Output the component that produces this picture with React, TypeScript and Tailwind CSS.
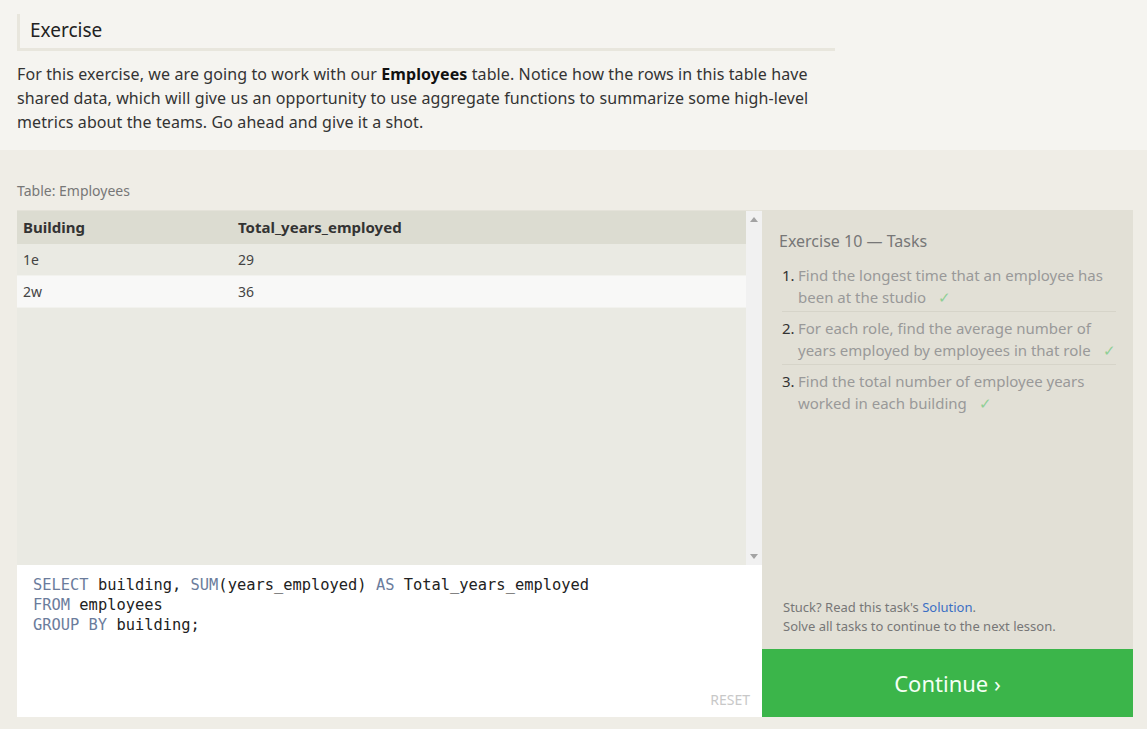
const sans = "font-['Noto_Sans','Open_Sans',sans-serif]";
const mono = "font-['DejaVu_Sans_Mono','Liberation_Mono',monospace]";

const rows = [
  { building: "1e", total: "29" },
  { building: "2w", total: "36" },
];

const tasks = [
  { text: "Find the longest time that an employee has been at the studio" },
  { text: "For each role, find the average number of years employed by employees in that role" },
  { text: "Find the total number of employee years worked in each building" },
];

function Check() {
  return <span className="ml-3 text-[#8fcf95]">✓</span>;
}

export default function App() {
  return (
    <div className={`min-h-screen bg-[#efede6] text-[#222] ${sans}`}>
      <section className="bg-[#f5f4f0] px-[17px] pt-[14px] pb-[16px]">
        <div className="w-[818px] border-l-[3px] border-b-[3px] border-[#e8e6dd] pl-[10px] pt-[3px] pb-[5px]">
          <h2 className="text-[19px] leading-[26px] text-[#222]">Exercise</h2>
        </div>
        <p className="mt-[11px] w-[810px] text-[16px] leading-[24px] tracking-[0.1px] text-[#333]">
          For this exercise, we are going to work with our <b className="text-[#111]">Employees</b> table. Notice how the
          rows in this table have shared data, which will give us an opportunity to use aggregate functions to summarize
          some high-level metrics about the teams. Go ahead and give it a shot.
        </p>
      </section>

      <section className="px-[17px] pt-[31px] pb-[12px]">
        <div className="mb-[9px] text-[14px] leading-[20px] text-[#777]">Table: Employees</div>
        <div className="flex w-[1116px]">
          <div className="flex w-[745px] flex-col">
            <div className="flex h-[355px] border-t border-[#e4e2d9] bg-[#eaeae3]">
              <div className="flex-1">
                <div className="flex h-[33px] items-center bg-[#dcdcd1] text-[15px] font-bold text-[#333]">
                  <div className="w-[221px] pl-[6px]">Building</div>
                  <div>Total_years_employed</div>
                </div>
                {rows.map((r, i) => (
                  <div
                    key={r.building}
                    className={`flex h-[32px] items-center border-b border-[#f2f2ee] text-[14px] text-[#444] ${
                      i % 2 === 1 ? "bg-[#f8f8f7]" : "bg-[#eaeae3]"
                    }`}
                  >
                    <div className="w-[221px] pl-[6px]">{r.building}</div>
                    <div>{r.total}</div>
                  </div>
                ))}
              </div>
              <div className="flex w-[16px] flex-col items-center justify-between bg-[#f1f1f1] py-[6px]">
                <svg width="8" height="5" viewBox="0 0 8 5">
                  <path d="M0 5 L4 0 L8 5 Z" fill="#a3a3a3" />
                </svg>
                <svg width="8" height="5" viewBox="0 0 8 5">
                  <path d="M0 0 L4 5 L8 0 Z" fill="#a3a3a3" />
                </svg>
              </div>
            </div>
            <div className="flex h-[152px] flex-col bg-white">
              <pre className={`flex-1 px-[16px] pt-[10px] text-[15.4px] leading-[20px] text-[#222] ${mono}`}>
                <span className="text-[#6b7c9c]">SELECT</span> building, <span className="text-[#6b7c9c]">SUM</span>
                (years_employed) <span className="text-[#6b7c9c]">AS</span> Total_years_employed{"\n"}
                <span className="text-[#6b7c9c]">FROM</span> employees{"\n"}
                <span className="text-[#6b7c9c]">GROUP BY</span> building;
              </pre>
              <div className="flex justify-end pr-[12px] pb-[7px] text-[14px] text-[#c8c8c8]">RESET</div>
            </div>
          </div>

          <div className="flex w-[371px] flex-col">
            <div className="flex h-[439px] flex-col justify-between bg-[#e2e0d6] px-[17px] pt-[20px] pb-[13px]">
              <div>
                <h3 className="text-[16px] leading-[22px] text-[#777]">Exercise 10 — Tasks</h3>
                <ol className="mt-[11px] pl-[3px]">
                  {tasks.map((t, i) => (
                    <li
                      key={i}
                      className={`flex py-[1px] text-[15px] leading-[22px] ${
                        i < tasks.length - 1 ? "mb-[4px] border-b border-[#d6d4c9] pb-[3px]" : ""
                      }`}
                    >
                      <span className="w-[16px] shrink-0 text-[#333]">{i + 1}.</span>
                      <span className="w-[320px] text-[#999]">
                        {t.text}
                        <Check />
                      </span>
                    </li>
                  ))}
                </ol>
              </div>
              <div className="pl-[4px] text-[13px] leading-[19px] text-[#777]">
                <div>
                  Stuck? Read this task's <span className="text-[#3b6fc4]">Solution</span>.
                </div>
                <div>Solve all tasks to continue to the next lesson.</div>
              </div>
            </div>
            <button className="flex h-[68px] items-center justify-center bg-[#3bb54a] text-[22px] text-[#f4fff4]">
              Continue ›
            </button>
          </div>
        </div>
      </section>
    </div>
  );
}
